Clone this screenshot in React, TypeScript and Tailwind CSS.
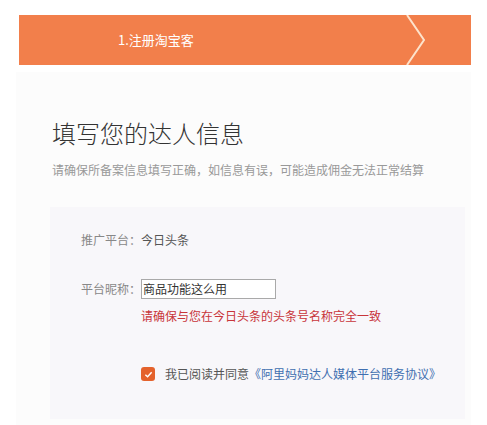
export default function App() {
  return (
    <main
      className="h-[425px] w-[487px] overflow-hidden bg-white pt-[15px]"
      style={{ fontFamily: '"Noto Sans CJK SC", "Noto Sans", sans-serif' }}
    >
      <div className="relative ml-[19px] mr-[16px] flex h-[50px] items-center bg-[#f27f4b]">
        <span className="pl-[99px] text-[13px] text-white">1.注册淘宝客</span>
        <svg className="absolute left-[386px] top-0 h-[50px] w-[22px]" viewBox="0 0 22 50" fill="none">
          <path d="M2 0 L19 25 L2 50" stroke="#fde3cc" strokeWidth="2" />
        </svg>
      </div>

      <section className="mx-[16px] mt-[7px] h-[360px] bg-[#fcfcfc] pt-[46px]">
        <h1 className="pl-[36px] text-[24px] leading-[30px] font-light text-[#333]">填写您的达人信息</h1>
        <p className="mt-[14px] pl-[36px] text-[12px] leading-[16px] text-[#999]">
          请确保所备案信息填写正确，如信息有误，可能造成佣金无法正常结算
        </p>

        <div className="ml-[34px] mr-[6px] mt-[29px] h-[212px] bg-[#f8f7fa] pl-[31px] pt-[25px] text-[12px]">
          <div className="flex h-[16px] items-center">
            <span className="text-[#888]">推广平台：</span>
            <span className="text-[#555]">今日头条</span>
          </div>

          <div className="mt-[31px] flex items-center">
            <span className="text-[#888]">平台昵称：</span>
            <div className="flex h-[20px] w-[135px] items-center border border-[#a9a9a9] bg-white pl-[1px] text-[#333]">
              商品功能这么用
            </div>
          </div>

          <p className="ml-[60px] mt-[8px] text-[#c8353a]">请确保与您在今日头条的头条号名称完全一致</p>

          <div className="ml-[60px] mt-[40px] flex items-center">
            <span className="flex h-[14px] w-[14px] items-center justify-center rounded-[3px] bg-[#e4622c]">
              <svg viewBox="0 0 10 10" className="h-[9px] w-[9px]" fill="none">
                <path d="M1.5 5.2 L4 7.5 L8.5 2.5" stroke="#fff" strokeWidth="1.6" />
              </svg>
            </span>
            <span className="ml-[10px] text-[#555]">我已阅读并同意</span>
            <span className="text-[#3f6fb0]">《阿里妈妈达人媒体平台服务协议》</span>
          </div>
        </div>
      </section>
    </main>
  );
}
